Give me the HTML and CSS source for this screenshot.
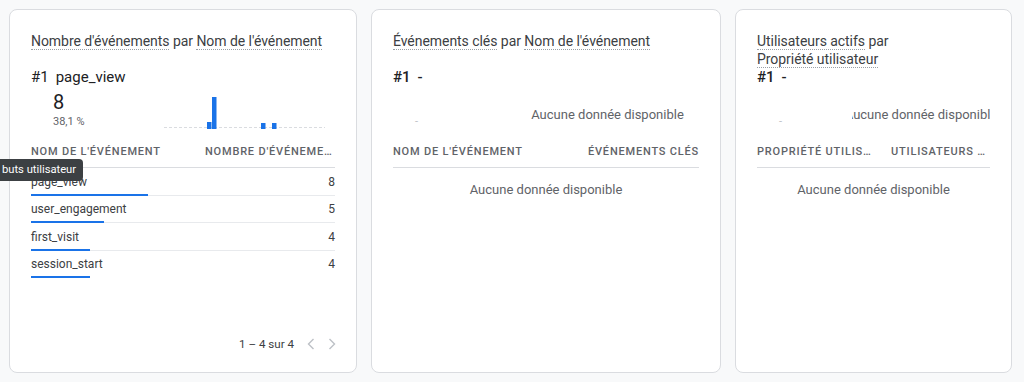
FILE: index.html
```html
<!DOCTYPE html>
<html lang="fr">
<head>
<meta charset="utf-8">
<title>Rapports</title>
<link rel="stylesheet" href="styles.css">
</head>
<body>
<div class="cards">
  <section class="card card--events">
    <h2 class="card-title"><span class="dim">Nombre d'événements</span> par <span class="dim">Nom de l'événement</span></h2>
    <div class="top-item"><span class="rank">#1</span>page_view</div>
    <div class="kpi-row">
      <div class="kpi">
        <div class="kpi-value">8</div>
        <div class="kpi-share">38,1 %</div>
      </div>
      <div class="chart">
        <svg width="161" height="34" viewBox="0 0 161 34">
          <line x1="0" y1="32.5" x2="161" y2="32.5" stroke="#dadce0" stroke-dasharray="3 2"/>
          <rect x="43" y="27" width="4.5" height="7" fill="#1a73e8"/>
          <rect x="48" y="2" width="4.5" height="32" fill="#1a73e8"/>
          <rect x="97" y="28" width="4.5" height="6" fill="#1a73e8"/>
          <rect x="108" y="28" width="4.5" height="6" fill="#1a73e8"/>
        </svg>
      </div>
    </div>
    <div class="table">
      <div class="thead thead--events">
        <div class="th"><span class="dim">Nom de l'événement</span></div>
        <div class="th th--num"><span class="dim">Nombre d'événements</span></div>
      </div>
      <div class="tr">
        <div class="td">page_view<div class="bar" style="width:117px"></div></div>
        <div class="td td--num">8</div>
      </div>
      <div class="tr">
        <div class="td">user_engagement<div class="bar" style="width:73px"></div></div>
        <div class="td td--num">5</div>
      </div>
      <div class="tr">
        <div class="td">first_visit<div class="bar" style="width:59px"></div></div>
        <div class="td td--num">4</div>
      </div>
      <div class="tr">
        <div class="td">session_start<div class="bar" style="width:59px"></div></div>
        <div class="td td--num">4</div>
      </div>
    </div>
    <div class="pager">
      <span class="pager-label">1 – 4 sur 4</span>
      <svg class="chev" width="8" height="14" viewBox="0 0 8 14"><path d="M6.5 2 1.5 7l5 5" fill="none" stroke="#bdc1c6" stroke-width="1.4"/></svg>
      <svg class="chev" width="8" height="14" viewBox="0 0 8 14"><path d="M1.5 2 6.5 7l-5 5" fill="none" stroke="#bdc1c6" stroke-width="1.4"/></svg>
    </div>
  </section>

  <section class="card card--key">
    <h2 class="card-title"><span class="dim">Événements clés</span> par <span class="dim">Nom de l'événement</span></h2>
    <div class="top-item top-item--empty"><span class="rank">#1</span>-</div>
    <div class="kpi-row">
      <div class="kpi">
        <div class="kpi-value"></div>
        <div class="kpi-share kpi-share--empty">-</div>
      </div>
      <div class="chart">
        <div class="nodata">Aucune donnée disponible</div>
      </div>
    </div>
    <div class="table">
      <div class="thead thead--key">
        <div class="th"><span class="dim">Nom de l'événement</span></div>
        <div class="th th--num"><span class="dim">Événements clés</span></div>
      </div>
      <div class="table-empty">Aucune donnée disponible</div>
    </div>
  </section>

  <section class="card card--users">
    <h2 class="card-title"><span class="dim">Utilisateurs actifs</span> par <span class="dim">Propriété utilisateur</span></h2>
    <div class="top-item top-item--empty"><span class="rank">#1</span>-</div>
    <div class="kpi-row">
      <div class="kpi">
        <div class="kpi-value"></div>
        <div class="kpi-share kpi-share--empty">-</div>
      </div>
      <div class="chart">
        <div class="nodata">Aucune donnée disponible</div>
      </div>
    </div>
    <div class="table">
      <div class="thead thead--users">
        <div class="th"><span class="dim">Propriété utilisateur</span></div>
        <div class="th th--num"><span class="dim">Utilisateurs actifs</span></div>
      </div>
      <div class="table-empty">Aucune donnée disponible</div>
    </div>
  </section>
</div>
<div class="tooltip">buts utilisateur</div>
</body>
</html>
```
FILE: styles.css
```css
* { box-sizing: border-box; }

body {
  margin: 0;
  background: #f8f9fa;
  font-family: Roboto, "Noto Sans", Arial, sans-serif;
  color: #3c4043;
}

.cards {
  display: flex;
  gap: 14px;
  padding: 9px 0 0 9px;
}

.card {
  flex: none;
  height: 364px;
  background: #fff;
  border: 1px solid #dadce0;
  border-radius: 8px;
  padding: 22px 21px 18px;
  display: flex;
  flex-direction: column;
}

.card--events { width: 348px; }
.card--key { width: 350px; }
.card--users { width: 277px; }

.card-title {
  margin: 0;
  height: 36px;
  font-size: 14px;
  font-weight: 400;
  line-height: 18px;
  letter-spacing: -0.05px;
  color: #3c4043;
}

.dim { border-bottom: 1px dotted #9aa0a6; }
.card-title .dim { white-space: nowrap; }

.top-item {
  font-size: 15px;
  line-height: 18px;
  color: #202124;
}
.top-item .rank { margin-right: 7px; }
.top-item--empty { font-weight: 500; }

.kpi-row {
  display: flex;
  margin-top: 3px;
}

.kpi {
  flex: none;
  width: 133px;
  padding-left: 22px;
}

.kpi-value {
  height: 26px;
  font-size: 20px;
  line-height: 26px;
  color: #202124;
}

.kpi-share {
  font-size: 11px;
  line-height: 14px;
  color: #5f6368;
}
.kpi-share--empty { color: #bdc1c6; }

.chart {
  flex: 1;
  align-self: flex-end;
  height: 34px;
  margin-right: 10px;
  overflow: hidden;
  display: flex;
  justify-content: center;
  align-items: center;
}
.chart svg { display: block; }

.card--users .kpi { width: 95px; }
.card--users .chart { margin-right: 0; }

.nodata {
  padding-top: 6px;
  font-size: 13px;
  line-height: 20px;
  color: #5f6368;
  white-space: nowrap;
}

.table { margin-top: 11px; }

.thead {
  display: grid;
  grid-template-columns: 1fr auto;
  border-bottom: 1px solid #dadce0;
  padding: 4px 0 7px;
}
.thead--events { grid-template-columns: 1fr 130px; }
.thead--users { grid-template-columns: 116px 1fr; column-gap: 18px; }

.th {
  font-size: 11px;
  font-weight: 500;
  line-height: 16px;
  letter-spacing: 0.8px;
  text-transform: uppercase;
  color: #5f6368;
  white-space: nowrap;
  overflow: hidden;
  text-overflow: ellipsis;
}
.th .dim { padding-bottom: 2px; }
.th--num { text-align: right; }

.tr {
  display: grid;
  grid-template-columns: 1fr auto;
  align-items: start;
  padding-top: 3.5px;
  border-bottom: 1px solid #e8eaed;
}
.tr:last-child { border-bottom: none; }

.td {
  font-size: 12px;
  line-height: 20px;
  color: #3c4043;
}
.td--num { text-align: right; }

.bar {
  height: 2px;
  margin-top: 2px;
  margin-bottom: -1px;
  background: #1a73e8;
}

.table-empty {
  margin-top: 12px;
  text-align: center;
  font-size: 13px;
  line-height: 20px;
  color: #5f6368;
}

.pager {
  margin-top: auto;
  height: 20px;
  display: flex;
  justify-content: flex-end;
  align-items: center;
  font-size: 11.6px;
  color: #3c4043;
}
.chev { display: block; margin-left: 13px; }
.chev:last-child { margin-right: -1px; }

.tooltip {
  position: absolute;
  left: 0;
  top: 159px;
  height: 22px;
  padding: 0 7px 0 2px;
  background: #3c4043;
  color: #fff;
  font-size: 11.2px;
  line-height: 22px;
  border-radius: 0 4px 4px 0;
}
```
